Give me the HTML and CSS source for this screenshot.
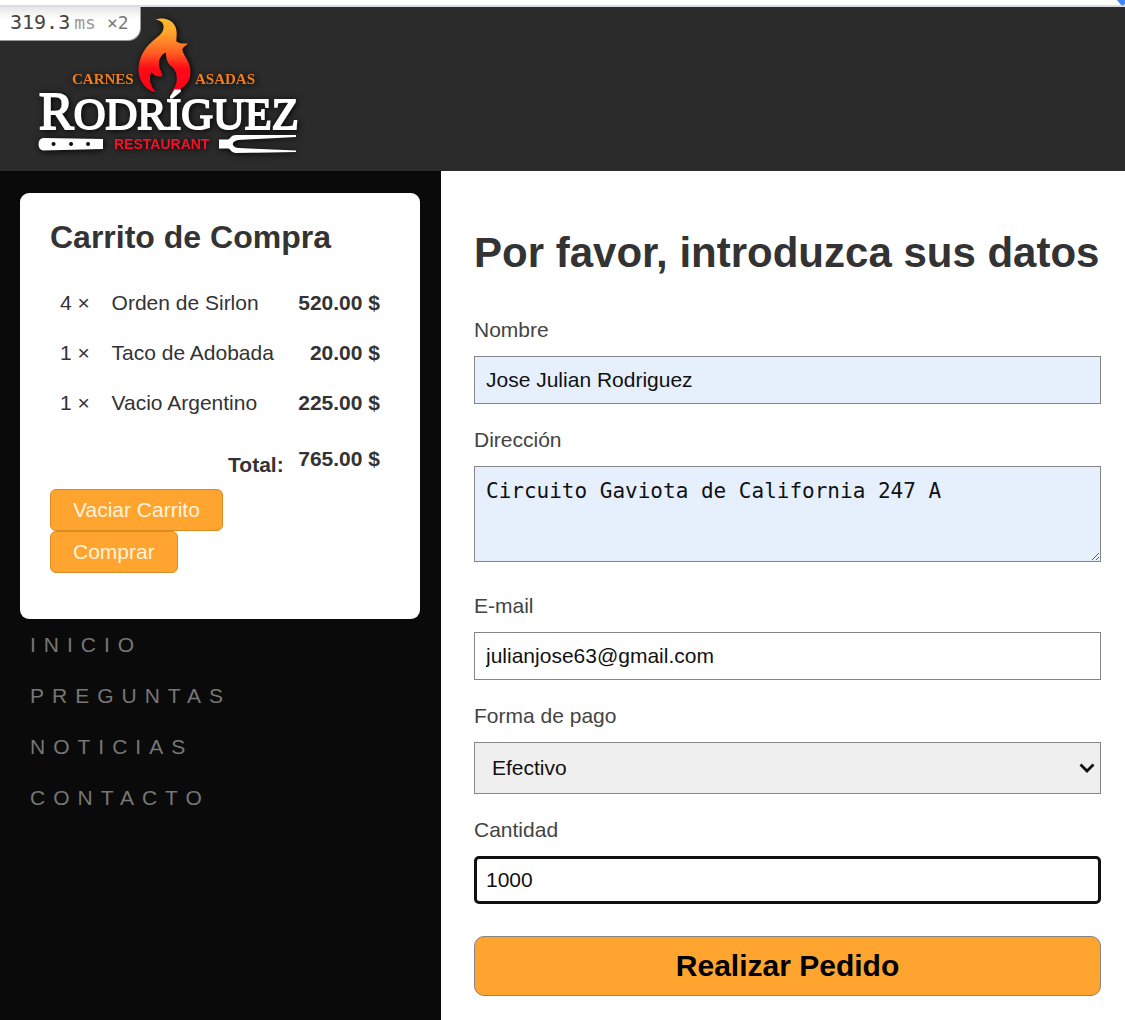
FILE: index.html
```html
<!DOCTYPE html>
<html lang="es">
<head>
<meta charset="utf-8">
<meta name="viewport" content="width=device-width, initial-scale=1">
<title>Carnes Asadas Rodríguez</title>
<link rel="stylesheet" href="styles.css">
</head>
<body>
<div class="topbar">
  <svg class="topbar-mark" viewBox="0 0 8 6" aria-hidden="true"><path d="M0 0H8V4L6 5.600L4 5Z" fill="#4285f4"/></svg>
</div>
<header class="header">
  <div class="timer"><span class="timer-value">319.3</span><span class="timer-unit">ms</span><span class="timer-count">×2</span></div>
  <svg class="logo" viewBox="30 12 280 150" role="img" aria-label="Carnes Asadas Rodríguez Restaurant">
    <defs>
      <linearGradient id="fire" x1="0" y1="0" x2="0" y2="1">
        <stop offset="0" stop-color="#ffb92e"/>
        <stop offset=".2" stop-color="#ffa42c"/>
        <stop offset=".48" stop-color="#ff5a22"/>
        <stop offset=".68" stop-color="#ff0a16"/>
        <stop offset="1" stop-color="#fb0018"/>
      </linearGradient>
    </defs>
    <path fill="url(#fire)" d="M155.500 19.500C161 17.500 171 17.500 175 26C178 32 176 37 176.500 41.500C180 44 184 43.500 188 43.500C186 46 182 47 182.500 50.500C184 57 190.500 61 190.500 72C190.500 84 182 90 171.500 92C174 88 177 85 176.800 78C176.500 69 172 68 169 64C166 60 166.500 56 165.500 52.500C161 55 158.500 60 159 65C159.400 69 162 72 162.500 76C158 77.500 153 75.500 151.500 72C149 76 149 87 156.500 92C147 92 138.500 81 138.500 70C138.500 58 144 49 151 42.500C157 37 163 34 163.500 28C164 22 160 20.500 155.500 19.500Z"/>
    <g class="logo-tag">
      <text x="72" y="84">CARNES</text>
      <text x="195" y="84">ASADAS</text>
    </g>
    <text class="logo-name" x="39" y="129">R<tspan class="logo-name-small">ODRÍGUEZ</tspan></text>
    <path fill="#fff" fill-rule="evenodd" d="M43 138L103 139V149L43 150.500C37 150 37 138.500 43 138ZM53.500 142a2 2 0 1 0 .1 0ZM71 142a2 2 0 1 0 .1 0ZM88 142a2 2 0 1 0 .1 0Z"/>
    <path fill="#fff" d="M219 139.500H228C231 138 231 135 236 135L296 135V137L238 140C234 141 232 143 233 145C234 147 236 148 239 148L296 150.500V152L236 153C231 153 231 149 228 148.500H219Z"/>
    <text class="logo-sub" x="114" y="149">RESTAURANT</text>
  </svg>
</header>
<div class="layout">
  <aside class="sidebar">
    <section class="cart">
      <h2 class="cart-title">Carrito de Compra</h2>
      <table class="cart-table">
        <tbody>
          <tr><td class="qty">4 ×</td><td>Orden de Sirlon</td><td class="price">520.00 $</td></tr>
          <tr><td class="qty">1 ×</td><td>Taco de Adobada</td><td class="price">20.00 $</td></tr>
          <tr><td class="qty">1 ×</td><td>Vacio Argentino</td><td class="price">225.00 $</td></tr>
        </tbody>
        <tfoot>
          <tr><th class="total-label" colspan="2" scope="row">Total:</th><td class="price">765.00 $</td></tr>
        </tfoot>
      </table>
      <div class="cart-actions">
        <button class="btn" type="button">Vaciar Carrito</button>
        <button class="btn" type="button">Comprar</button>
      </div>
    </section>
    <nav class="nav">
      <a href="#">INICIO</a>
      <a href="#">PREGUNTAS</a>
      <a href="#">NOTICIAS</a>
      <a href="#">CONTACTO</a>
    </nav>
  </aside>
  <main class="main">
    <h1 class="title">Por favor, introduzca sus datos</h1>
    <form class="form">
      <div class="field">
        <label for="nombre">Nombre</label>
        <input class="control filled" id="nombre" type="text" value="Jose Julian Rodriguez">
      </div>
      <div class="field">
        <label for="direccion">Dirección</label>
        <textarea class="control filled area" id="direccion">Circuito Gaviota de California 247 A</textarea>
      </div>
      <div class="field">
        <label for="email">E-mail</label>
        <input class="control" id="email" type="email" value="julianjose63@gmail.com">
      </div>
      <div class="field">
        <label for="pago">Forma de pago</label>
        <div class="select-wrap">
          <select class="control select" id="pago"><option>Efectivo</option></select>
          <svg class="chevron" viewBox="0 0 16 10" aria-hidden="true"><path d="M1.500 1.500L8 8L14.500 1.500" fill="none" stroke="#111" stroke-width="2.800"/></svg>
        </div>
      </div>
      <div class="field">
        <label for="cantidad">Cantidad</label>
        <input class="control current" id="cantidad" type="text" inputmode="numeric" value="1000">
      </div>
      <button class="submit" type="submit">Realizar Pedido</button>
    </form>
  </main>
</div>
</body>
</html>
```
FILE: styles.css
```css
* {
  box-sizing: border-box;
}

body {
  margin: 0;
  min-height: 100vh;
  display: flex;
  flex-direction: column;
  background: #fff;
  color: #333;
  font: 21px/30px "Liberation Sans", Arial, sans-serif;
}

.topbar {
  display: flex;
  justify-content: flex-end;
  height: 7px;
  border-bottom: 2px solid #dcdce2;
}

.topbar-mark {
  width: 8px;
  height: 6px;
}

.header {
  position: relative;
  padding: 5px 30px 9px;
  background: #2b2b2b;
}

.timer {
  position: absolute;
  top: 0;
  left: 0;
  display: flex;
  align-items: baseline;
  padding: 0 11px 2px 10px;
  border-right: 1px solid #999;
  border-bottom: 1px solid #999;
  border-bottom-right-radius: 13px;
  background: linear-gradient(#e6e6e6, #fff 12px);
  font-family: "DejaVu Sans Mono", monospace;
  font-size: 18px;
  line-height: 31px;
  color: #999;
}

.timer-value {
  font-size: 20px;
  color: #444;
}

.timer-unit {
  margin: 0 11px 0 4px;
}

.timer-count {
  color: #777;
}

.logo {
  display: block;
  width: 280px;
  height: 150px;
  filter: drop-shadow(1px 1px 3px #000);
}

.logo-tag {
  font: bold 15px "Liberation Serif", serif;
  fill: #f07d1a;
}

.logo-name {
  font: 52px "Liberation Serif", serif;
  fill: #fff;
  stroke: #fff;
  stroke-width: 2px;
}

.logo-name-small {
  font-size: 44px;
}

.logo-sub {
  font: bold 14px "Liberation Sans", Arial, sans-serif;
  fill: #f5102a;
}

.layout {
  flex: 1;
  display: grid;
  grid-template-columns: 441px 1fr;
}

.sidebar {
  padding: 22px 21px 22px 20px;
  background: #0a0a0a;
}

.cart {
  padding: 24px 30px 46px;
  border-radius: 9px;
  background: #fff;
}

.cart-title {
  margin: 0 0 21px;
  font-size: 32px;
  line-height: 40px;
}

.cart-table {
  width: 100%;
  border-collapse: collapse;
}

.cart-table td {
  padding: 10px;
}

.cart-table .qty {
  padding-right: 11px;
}

.cart-table .price {
  font-weight: bold;
  text-align: right;
}

.cart-table tfoot td {
  padding: 16px 10px 15px;
}

.cart-table .total-label {
  padding: 12px 3px 0;
  text-align: right;
}

.cart-actions {
  display: flex;
  flex-direction: column;
  align-items: flex-start;
}

.btn {
  padding: 5px 22px;
  border: 1px solid #d98b26;
  border-radius: 6px;
  background: #ffa52f;
  color: #fff3df;
  font: inherit;
}

.nav {
  display: flex;
  flex-direction: column;
  align-items: flex-start;
  padding-left: 10px;
}

.nav a {
  color: #777;
  letter-spacing: 8px;
  line-height: 51px;
  text-decoration: none;
}

.main {
  padding: 52px 24px 24px 33px;
}

.title {
  margin: 0 0 31px;
  font-size: 42px;
  line-height: 60px;
  white-space: nowrap;
}

.form,
.field {
  display: flex;
  flex-direction: column;
}

.form {
  gap: 20px;
}

.field {
  gap: 11px;
}

.field label {
  line-height: 31px;
  color: #444;
}

.control {
  width: 100%;
  height: 48px;
  margin: 0;
  padding: 0 11px;
  border: 1px solid #858585;
  border-radius: 0;
  background: #fff;
  color: #111;
  font: inherit;
}

.filled {
  background: #e6f0fd;
}

.area {
  height: 96px;
  margin-bottom: 8px;
  padding: 9px 11px;
  font-family: "DejaVu Sans Mono", monospace;
}

.select-wrap {
  position: relative;
  display: flex;
}

.select {
  height: 52px;
  padding: 0 30px 0 17px;
  background: #efefef;
  appearance: none;
}

.chevron {
  position: absolute;
  top: 21px;
  right: 6px;
  width: 16px;
  height: 10px;
  pointer-events: none;
}

.current {
  padding: 0 9px;
  border: 3px solid #101010;
  border-radius: 5px;
  outline: 0;
}

.submit {
  height: 60px;
  margin-top: 12px;
  border: 1px solid #858585;
  border-radius: 10px;
  background: #ffa52f;
  color: #000;
  font: bold 30px "Liberation Sans", Arial, sans-serif;
}
```
